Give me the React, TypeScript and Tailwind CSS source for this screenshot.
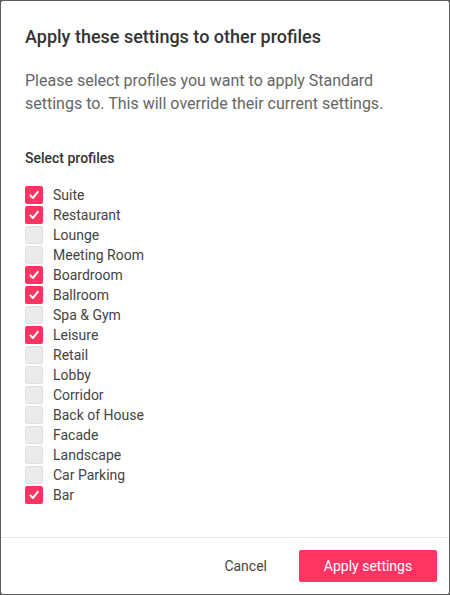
import { useState } from 'react';

// profile list with initial checked state
const PROFILES = [
  { name: 'Suite', on: true },
  { name: 'Restaurant', on: true },
  { name: 'Lounge', on: false },
  { name: 'Meeting Room', on: false },
  { name: 'Boardroom', on: true },
  { name: 'Ballroom', on: true },
  { name: 'Spa & Gym', on: false },
  { name: 'Leisure', on: true },
  { name: 'Retail', on: false },
  { name: 'Lobby', on: false },
  { name: 'Corridor', on: false },
  { name: 'Back of House', on: false },
  { name: 'Facade', on: false },
  { name: 'Landscape', on: false },
  { name: 'Car Parking', on: false },
  { name: 'Bar', on: true },
];

function Checkbox({ checked, onClick }: { checked: boolean; onClick: () => void }) {
  return (
    <button
      type="button"
      onClick={onClick}
      className={
        checked
          ? 'w-[18px] h-[18px] rounded-[2px] bg-[#ff3462] flex items-center justify-center'
          : 'w-[18px] h-[18px] rounded-[2px] bg-[#ebebeb] border border-[#e0e0e0]'
      }
    >
      {checked && (
        <svg width="12" height="12" viewBox="0 0 12 12" fill="none">
          <path d="M2.3 6.4 L4.9 9 L9.8 2.9" stroke="white" strokeWidth="2" strokeLinecap="round" strokeLinejoin="round" />
        </svg>
      )}
    </button>
  );
}

export default function App() {
  const [items, setItems] = useState(PROFILES);

  const toggle = (i: number) =>
    setItems((prev) => prev.map((p, j) => (j === i ? { ...p, on: !p.on } : p)));

  return (
    <div className="w-[450px] h-[595px] bg-[#5c5c5c] p-px font-['Roboto',sans-serif]">
      <div className="h-full bg-white rounded-[2px] flex flex-col">
        <div className="flex-1 px-6 pt-6">
          <h1 className="text-[18px] leading-6 font-medium text-[#333]">Apply these settings to other profiles</h1>
          <p className="mt-5 text-[16px] leading-[23px] text-[#666]">
            Please select profiles you want to apply Standard settings to. This will override their current settings.
          </p>
          <div className="mt-[34px] text-[14px] leading-[18px] font-medium text-[#333]">Select profiles</div>
          <div className="mt-[18px] flex flex-col">
            {items.map((p, i) => (
              <label key={p.name} className="h-5 flex items-center gap-[10px] cursor-pointer">
                <Checkbox checked={p.on} onClick={() => toggle(i)} />
                <span className="text-[14px] text-[#444]">{p.name}</span>
              </label>
            ))}
          </div>
        </div>
        <div className="border-t border-[#e8e8e8] px-3 pt-3 pb-3 flex items-center justify-end gap-8">
          <button type="button" className="text-[14px] text-[#444]">Cancel</button>
          <button type="button" className="h-8 w-[138px] rounded-[2px] bg-[#ff3462] text-white text-[14px]">
            Apply settings
          </button>
        </div>
      </div>
    </div>
  );
}
